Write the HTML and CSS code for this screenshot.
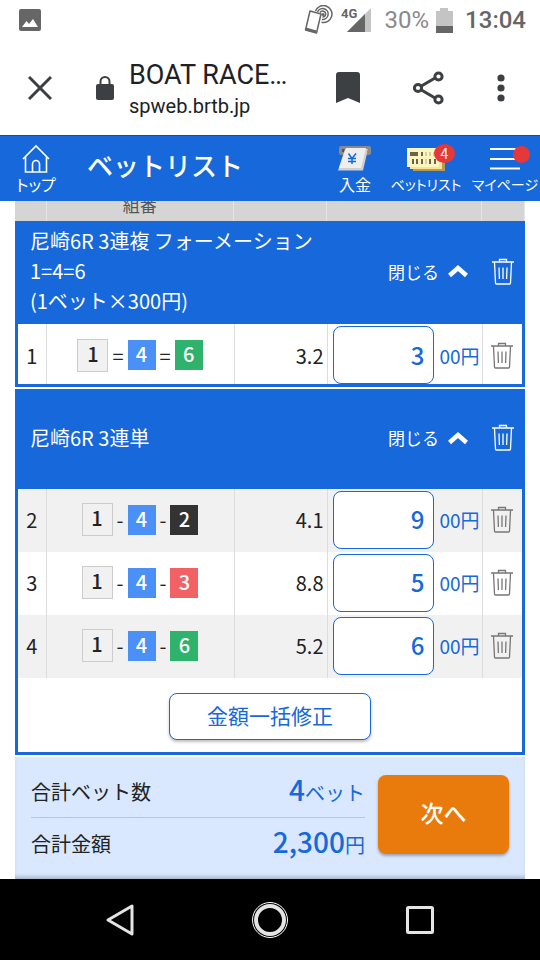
FILE: index.html
```html
<!DOCTYPE html>
<html lang="ja">
<head>
    <meta charset="UTF-8">
    <meta name="viewport" content="width=device-width, initial-scale=1.0">
    <title>ベットリスト</title>
    <link rel="stylesheet" href="styles.css">
</head>
<body>
    <!-- アイコン定義 -->
    <svg class="defs" aria-hidden="true">
        <symbol id="trash" viewBox="0 0 22 26">
            <path d="M0 3.5h22M7.5 3.5V1h7v2.500M2.500 4l1 20.500q0 1 1 1h13q1 0 1-1L19.500 4M7 9l.4 11.500M11 9v11.500M15 9l-.4 11.500" fill="none" stroke="currentColor" stroke-width="1.300"/>
        </symbol>
        <symbol id="up" viewBox="0 0 20 14">
            <path d="M1.500 11.500L10 4l8.500 7.500" fill="none" stroke="currentColor" stroke-width="4.500"/>
        </symbol>
    </svg>

    <div class="status">
        <svg width="22" height="22" viewBox="0 0 22 22"><rect width="22" height="22" rx="2" fill="#666"/><path d="M3 18l4.500-6 2.500 3 4-5 5 8z" fill="#fff"/></svg>
        <div class="status-right">
            <svg class="nfc" width="30" height="30" viewBox="0 0 30 30">
                <path d="M7 6l11 3-4.500 19-11-3z" fill="#fff" stroke="#666" stroke-width="1.500" stroke-linejoin="round"/>
                <path d="M3 22.500l10.700 3-.6 2.500-10.700-3z" fill="#666"/>
                <g fill="none" stroke="#666" stroke-width="1.500"><path d="M12.500 6A8.500 8.500 0 1 1 18.500 17.300M14.500 7A5.500 5.500 0 1 1 19 14.500M17 7.500A3 3 0 1 1 19.500 12"/></g>
                <circle cx="20" cy="9.500" r="1.500" fill="#666"/>
            </svg>
            <svg class="signal" width="30" height="26" viewBox="0 0 30 26">
                <path d="M6 25L30 1v24z" fill="#c4c4c4"/><path d="M6 25L24 7v18z" fill="#666"/>
                <text x="0" y="11" class="net">4G</text>
            </svg>
            <span class="percent">30%</span>
            <svg class="battery" width="17" height="25" viewBox="0 0 17 25"><path d="M0 3h4V0h8v3h5v22H0z" fill="#c4c4c4"/><path d="M0 18h17v7H0z" fill="#666"/></svg>
            <span class="clock">13:04</span>
        </div>
    </div>

    <div class="browser-bar">
        <button class="icon-btn" aria-label="閉じる"><svg width="24" height="24" viewBox="0 0 24 24"><path d="M1 1l22 22M23 1L1 23" stroke="#3c4043" stroke-width="3"/></svg></button>
        <svg class="lock" width="18" height="24" viewBox="0 0 18 24"><rect y="8" width="18" height="16" rx="2" fill="#3c4043"/><path d="M4.500 9V5.500a4.500 4.500 0 0 1 9 0V9" fill="none" stroke="#3c4043" stroke-width="2"/></svg>
        <div class="page-info">
            <div class="page-title">BOAT RACE…</div>
            <div class="page-url">spweb.brtb.jp</div>
        </div>
        <div class="browser-actions">
            <button class="icon-btn" aria-label="ブックマーク"><svg width="24" height="31" viewBox="0 0 24 31"><path d="M0 31V3q0-3 3-3h18q3 0 3 3v28l-12-5z" fill="#3c4043"/></svg></button>
            <button class="icon-btn" aria-label="共有"><svg width="31" height="34" viewBox="0 0 31 34"><path d="M25.500 5L5 17l20.500 12" fill="none" stroke="#3c4043" stroke-width="3"/><g fill="#fff" stroke="#3c4043" stroke-width="3"><circle cx="25.500" cy="5.500" r="3.600"/><circle cx="5" cy="17" r="3.600"/><circle cx="25.500" cy="28.500" r="3.600"/></g></svg></button>
            <button class="icon-btn" aria-label="メニュー"><svg width="8" height="28" viewBox="0 0 8 28"><g fill="#3c4043"><circle cx="4" cy="4" r="3.600"/><circle cx="4" cy="14" r="3.600"/><circle cx="4" cy="24" r="3.600"/></g></svg></button>
        </div>
    </div>

    <header class="site-header">
        <a class="nav-item home" href="#">
            <svg width="28" height="30" viewBox="0 0 28 30"><path d="M1 15L14 2l13 13M3.500 13v15h21V13M10.500 28v-8a3.500 3.500 0 0 1 7 0v8" fill="none" stroke="#fff" stroke-width="1.600"/></svg>
            <span>トップ</span>
        </a>
        <h1>ベットリスト</h1>
        <nav class="site-nav">
            <a class="nav-item deposit" href="#">
                <svg width="34" height="30" viewBox="0 0 34 30"><rect x="1" y="2" width="32" height="9" rx="2" fill="#8b8b8b"/><path d="M4 5h26v3H4z" fill="#555"/><path d="M7 5h23l-5 21.500H0z" fill="#d0d0d0"/><path d="M8 4h20l-5 20H1z" fill="#eee"/><path d="M10.500 9.500l3.500 5 4-5M14 14v6M10 14.500h8M10 17.500h8" fill="none" stroke="#1768da" stroke-width="1.500"/></svg>
                <span>入金</span>
            </a>
            <a class="nav-item betlist" href="#">
                <svg width="40" height="30" viewBox="0 0 40 30"><path d="M7 9h32v18H7z" fill="#b89b50"/><path d="M4 7h32v18H4z" fill="#fae493"/><path d="M1 4h32v19H1z" fill="#fdf5bf"/><path d="M4 8h8v4H4zM15 8h2v4h-2zM6 15h2v5H6zM10 15h2v5h-2zM15 15h2v5h-2zM23 15h2v5h-2zM28 15h2v5h-2z" fill="#69654d"/><path d="M19 8h2v4h-2zM23 8h2v4h-2zM27 8h2v4h-2zM19 15h2v5h-2z" fill="#d8cf9d"/></svg>
                <i class="badge">4</i>
                <span>ベットリスト</span>
            </a>
            <a class="nav-item mypage" href="#">
                <svg width="32" height="30" viewBox="0 0 32 30"><path d="M1 5h30M1 15h30M1 24.500h30" stroke="#fff" stroke-width="2"/></svg>
                <i class="badge dot"></i>
                <span>マイページ</span>
            </a>
        </nav>
    </header>

    <main>
        <div class="head-clip">
            <table class="bets head">
                <colgroup><col class="c-no"><col><col class="c-odds"><col class="c-money"><col class="c-del"></colgroup>
                <thead><tr><th></th><th>組番</th><th></th><th></th><th></th></tr></thead>
            </table>
        </div>

        <section class="group">
            <div class="group-head">
                <h2>尼崎6R 3連複 フォーメーション<br>1=4=6<br>(1ベット×300円)</h2>
                <button class="fold">閉じる<svg width="20" height="14"><use href="#up"/></svg></button>
                <button class="del" aria-label="削除"><svg width="22" height="27"><use href="#trash"/></svg></button>
            </div>
            <table class="bets">
                <colgroup><col class="c-no"><col><col class="c-odds"><col class="c-money"><col class="c-del"></colgroup>
                <tbody>
                    <tr>
                        <td>1</td>
                        <td><div class="combo"><b class="n1">1</b>=<b class="n4">4</b>=<b class="n6">6</b></div></td>
                        <td class="odds">3.2</td>
                        <td><label class="money"><input type="text" inputmode="numeric" value="3">00円</label></td>
                        <td><button class="del" aria-label="削除"><svg width="22" height="27"><use href="#trash"/></svg></button></td>
                    </tr>
                </tbody>
            </table>
        </section>

        <section class="group">
            <div class="group-head">
                <h2>尼崎6R 3連単</h2>
                <button class="fold">閉じる<svg width="20" height="14"><use href="#up"/></svg></button>
                <button class="del" aria-label="削除"><svg width="22" height="27"><use href="#trash"/></svg></button>
            </div>
            <table class="bets striped">
                <colgroup><col class="c-no"><col><col class="c-odds"><col class="c-money"><col class="c-del"></colgroup>
                <tbody>
                    <tr>
                        <td>2</td>
                        <td><div class="combo"><b class="n1">1</b>-<b class="n4">4</b>-<b class="n2">2</b></div></td>
                        <td class="odds">4.1</td>
                        <td><label class="money"><input type="text" inputmode="numeric" value="9">00円</label></td>
                        <td><button class="del" aria-label="削除"><svg width="22" height="27"><use href="#trash"/></svg></button></td>
                    </tr>
                    <tr>
                        <td>3</td>
                        <td><div class="combo"><b class="n1">1</b>-<b class="n4">4</b>-<b class="n3">3</b></div></td>
                        <td class="odds">8.8</td>
                        <td><label class="money"><input type="text" inputmode="numeric" value="5">00円</label></td>
                        <td><button class="del" aria-label="削除"><svg width="22" height="27"><use href="#trash"/></svg></button></td>
                    </tr>
                    <tr>
                        <td>4</td>
                        <td><div class="combo"><b class="n1">1</b>-<b class="n4">4</b>-<b class="n6">6</b></div></td>
                        <td class="odds">5.2</td>
                        <td><label class="money"><input type="text" inputmode="numeric" value="6">00円</label></td>
                        <td><button class="del" aria-label="削除"><svg width="22" height="27"><use href="#trash"/></svg></button></td>
                    </tr>
                </tbody>
            </table>
            <div class="bulk"><button class="bulk-btn">金額一括修正</button></div>
        </section>

        <section class="summary">
            <dl>
                <div><dt>合計ベット数</dt><dd><strong>4</strong>ベット</dd></div>
                <div><dt>合計金額</dt><dd><strong>2,300</strong>円</dd></div>
            </dl>
            <button class="next">次へ</button>
        </section>
    </main>

    <div class="android-nav">
        <button class="icon-btn" aria-label="戻る"><svg width="40" height="40" viewBox="0 0 40 40"><path d="M8 20l24-14v28z" fill="none" stroke="#e4e4e4" stroke-width="3" stroke-linejoin="round"/></svg></button>
        <button class="icon-btn" aria-label="ホーム"><svg width="40" height="40" viewBox="0 0 40 40"><circle cx="20" cy="20" r="17.500" fill="none" stroke="#fff"/><circle cx="20" cy="20" r="14" fill="none" stroke="#e4e4e4" stroke-width="4"/></svg></button>
        <button class="icon-btn" aria-label="履歴"><svg width="40" height="40" viewBox="0 0 40 40"><rect x="7.500" y="7.500" width="25" height="25" rx="1" fill="none" stroke="#e4e4e4" stroke-width="3"/></svg></button>
    </div>
</body>
</html>
```

FILE: styles.css
```css
* {
    box-sizing: border-box;
}

body {
    display: flex;
    flex-direction: column;
    min-height: 100vh;
    margin: 0;
    background-color: #fff;
    color: #222;
    font-family: "Noto Sans CJK JP", sans-serif;
    font-size: 20px;
}

h1, h2, dl, dd {
    margin: 0;
}

svg {
    display: block;
}

button {
    padding: 0;
    border: none;
    background: none;
    color: inherit;
    font-family: inherit;
    cursor: pointer;
}

.defs {
    position: absolute;
    width: 0;
    height: 0;
}

/* ステータスバー */
.status {
    display: flex;
    justify-content: space-between;
    align-items: center;
    height: 42px;
    padding: 0 14px 2px 19px;
    color: #666;
    font: 500 24px Roboto, sans-serif;
}

.status-right {
    display: flex;
    align-items: center;
}

.signal {
    margin: 0 14px 0 8px;
}

.net {
    font: bold 13px Roboto, sans-serif;
    fill: #666;
}

.percent {
    color: #8a8a8a;
    font-weight: 400;
}

.battery {
    margin: 0 12px 0 7px;
}

/* ブラウザバー */
.browser-bar {
    display: flex;
    align-items: center;
    height: 93px;
    padding: 0 35px 2px 28px;
    color: #202124;
    font-family: Roboto, sans-serif;
}

.lock {
    margin: 0 15px 0 44px;
}

.page-info {
    flex: 1;
    padding-top: 3px;
}

.page-title {
    font-size: 27px;
    line-height: 34px;
}

.page-url {
    font-size: 20px;
    line-height: 28px;
}

.browser-actions {
    display: flex;
    align-items: center;
    gap: 53px;
}

/* ヘッダー */
.site-header {
    display: flex;
    align-items: center;
    height: 66px;
    border-top: 1px solid #104f9f;
    background-color: #1768da;
    color: #fff;
}

.site-header h1 {
    flex: 1;
    padding-bottom: 8px;
    font-size: 26px;
    font-weight: 500;
    line-height: 38px;
    white-space: nowrap;
}

.nav-item {
    position: relative;
    display: flex;
    flex-direction: column;
    align-items: center;
    color: #fff;
    font-size: 14px;
    line-height: 20px;
    text-decoration: none;
    white-space: nowrap;
    font-feature-settings: "palt";
}

.home {
    width: 72px;
    margin-right: 15px;
    font-size: 16px;
}

.site-nav {
    display: flex;
}

.deposit {
    width: 54px;
    font-size: 16px;
}

.betlist {
    width: 88px;
}

.mypage {
    width: 70px;
}

.badge {
    position: absolute;
    top: 0;
    right: 15px;
    width: 21px;
    height: 19px;
    border-radius: 50%;
    background-color: #e5383b;
    font-size: 14px;
    font-style: normal;
    line-height: 18px;
    text-align: center;
}

.dot {
    top: 2px;
    right: 10px;
    width: 17px;
    height: 17px;
}

/* ベット一覧 */
main {
    display: flex;
    flex: 1;
    flex-direction: column;
    padding: 0 15px;
}

.head-clip {
    display: flex;
    align-items: flex-end;
    height: 20px;
    overflow: hidden;
}

.bets {
    width: 100%;
    border-collapse: collapse;
    table-layout: fixed;
}

.c-no {
    width: 28px;
}

.c-odds {
    width: 93px;
}

.c-money {
    width: 155px;
}

.c-del {
    width: 40px;
}

.head {
    background-color: #d5d5d5;
    color: #555;
}

.head .c-no {
    width: 31px;
}

.head .c-del {
    width: 43px;
}

.head th {
    height: 32px;
    padding: 0;
    border-right: 1px solid #e6e6e6;
    font-size: 17px;
    font-weight: 400;
    line-height: 32px;
}

.group {
    margin-bottom: 2px;
    border: 3px solid #1768da;
    border-top: none;
}

.group-head {
    display: flex;
    align-items: center;
    min-height: 100px;
    padding: 5px 8px 8px 12px;
    background-color: #1768da;
    color: #fff;
}

.group-head h2 {
    flex: 1;
    font-size: 20px;
    font-weight: 400;
    line-height: 30px;
}

.fold {
    display: flex;
    align-items: center;
    gap: 9px;
    margin-right: 24px;
    font-size: 17px;
}

.bets td {
    height: 63px;
    padding: 0 0 2px;
    border-right: 1px solid #ddd;
    text-align: center;
}

.bets:not(.striped) td {
    height: 60px;
    padding: 2px 0 0;
}

.bets td:last-child {
    border-right: none;
}

.bets td.odds {
    padding-right: 3px;
    text-align: right;
}

.striped tr:nth-child(odd) {
    background-color: #f1f1f1;
}

.combo {
    display: flex;
    justify-content: center;
    align-items: center;
    gap: 4px;
}

.combo b {
    width: 28px;
    height: 30px;
    color: #fff;
    font-weight: 500;
    line-height: 28px;
}

.combo .n1 {
    width: 31px;
    height: 33px;
    border: 1px solid #ccc;
    background-color: #f1f1f1;
    color: #222;
}

.combo .n2 {
    background-color: #333;
}

.combo .n3 {
    background-color: #f26163;
}

.combo .n4 {
    background-color: #4a90f7;
}

.combo .n6 {
    background-color: #2fb26c;
}

.money {
    display: flex;
    align-items: center;
    gap: 6px;
    padding-left: 5px;
    color: #1768da;
    font-size: 19px;
    white-space: nowrap;
}

.money input {
    width: 101px;
    height: 58px;
    padding: 0 8px 2px;
    border: 1px solid #1768da;
    border-radius: 8px;
    background-color: #fff;
    color: #1768da;
    font-family: inherit;
    font-size: 24px;
    font-weight: 500;
    text-align: right;
}

.bets .del {
    display: block;
    margin: 0 auto;
    color: #777;
}

.bulk {
    display: flex;
    justify-content: center;
    padding: 15px 0 12px;
}

.bulk-btn {
    width: 202px;
    height: 47px;
    padding-bottom: 4px;
    border: 1px solid #1768da;
    border-radius: 8px;
    background-color: #fff;
    box-shadow: 0 2px 3px rgba(0, 0, 0, 0.25);
    color: #1768da;
    font-size: 21px;
}

/* 合計 */
.summary {
    display: flex;
    flex: 1;
    gap: 13px;
    align-items: flex-start;
    padding: 18px 16px 6px;
    background-color: #d9e8ff;
    box-shadow: inset 0 -4px 4px -2px rgba(0, 0, 0, 0.25);
}

.summary dl {
    flex: 1;
}

.summary dl div {
    display: flex;
    justify-content: space-between;
    align-items: center;
    height: 50px;
}

.summary dl div:first-child {
    height: 43px;
    padding-bottom: 10px;
    border-bottom: 1px solid #abc9f7;
}

.summary dd {
    color: #1768da;
    line-height: 32px;
}

.summary strong {
    font-size: 28px;
    font-weight: 500;
}

.next {
    width: 131px;
    height: 79px;
    padding-bottom: 6px;
    border-radius: 8px;
    background-color: #e97b0c;
    box-shadow: 0 2px 3px rgba(0, 0, 0, 0.3);
    color: #fff;
    font-size: 23px;
    font-weight: 500;
}

/* ナビゲーションバー */
.android-nav {
    display: flex;
    justify-content: center;
    align-items: center;
    gap: 110px;
    height: 81px;
    background-color: #000;
}
```
